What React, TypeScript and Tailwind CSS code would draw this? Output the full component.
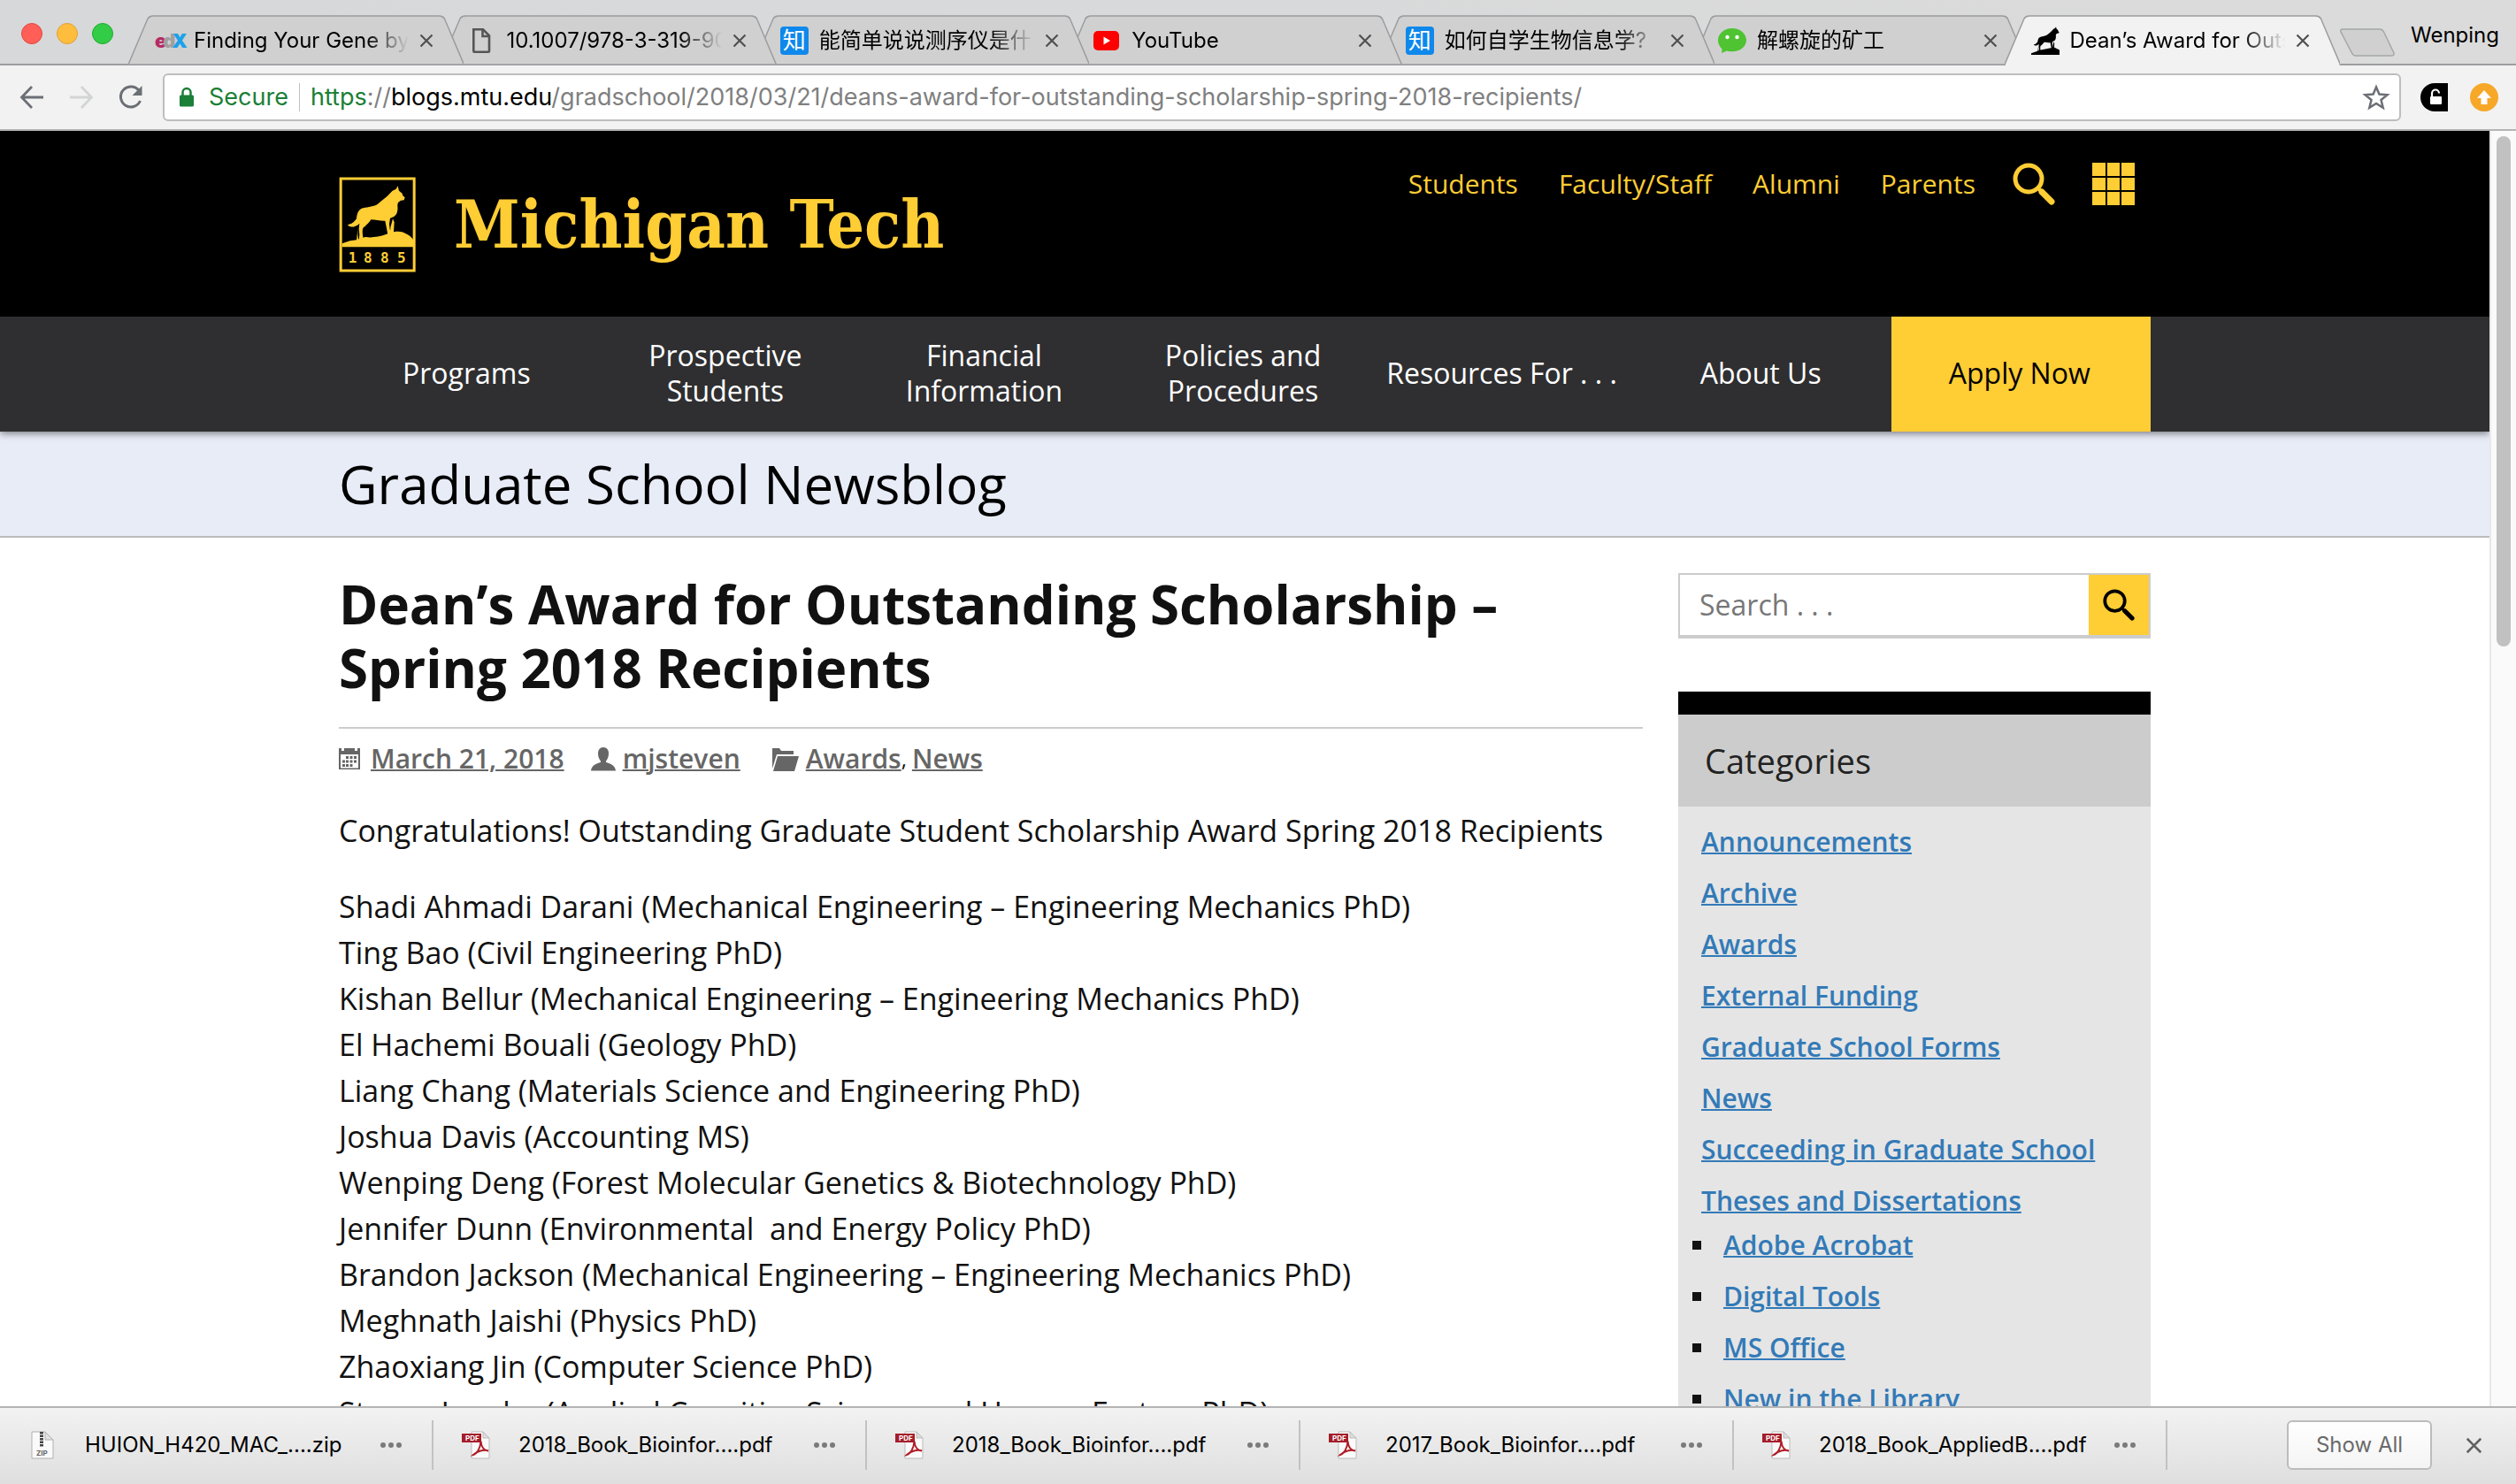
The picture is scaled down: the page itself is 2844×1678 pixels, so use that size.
import React from "react";

const names = [
  "Shadi Ahmadi Darani (Mechanical Engineering – Engineering Mechanics PhD)",
  "Ting Bao (Civil Engineering PhD)",
  "Kishan Bellur (Mechanical Engineering – Engineering Mechanics PhD)",
  "El Hachemi Bouali (Geology PhD)",
  "Liang Chang (Materials Science and Engineering PhD)",
  "Joshua Davis (Accounting MS)",
  "Wenping Deng (Forest Molecular Genetics & Biotechnology PhD)",
  "Jennifer Dunn (Environmental \u00a0and Energy Policy PhD)",
  "Brandon Jackson (Mechanical Engineering – Engineering Mechanics PhD)",
  "Meghnath Jaishi (Physics PhD)",
  "Zhaoxiang Jin (Computer Science PhD)",
  "Steven Landry (Applied Cognitive Science and Human Factors PhD)",
];

const categories = [
  "Announcements",
  "Archive",
  "Awards",
  "External Funding",
  "Graduate School Forms",
  "News",
  "Succeeding in Graduate School",
  "Theses and Dissertations",
];

const subcategories = ["Adobe Acrobat", "Digital Tools", "MS Office", "New in the Library"];

const WOLF =
  "M222 49 L226 65 L237 74 L239 82 L246 88 L243 97 L232 98 L224 104 C218 112 224 124 220 136 C218 148 209 155 196 158 L193 178 L195 196 L203 208 L188 214 L184 192 L179 167 C164 168 148 163 131 163 C124 176 112 184 104 191 C101 200 102 210 104 222 L106 234 L90 234 L92 214 L90 194 L92 176 C84 184 72 190 62 187 C57 186 53 184 53 180 C68 178 74 170 82 160 C84 140 90 128 104 124 C122 119 142 119 154 110 C166 100 176 92 188 82 L203 66 L216 59 Z M205 160 L210 172 L208 207 L197 207 L197 190 Z M87 194 L86 214 L89 236 L82 236 L84 214 Z";
const HILL =
  "M33 244 L60 235 L82 232 L104 224 C116 219 124 226 140 222 C160 221 176 216 196 208 C212 202 234 200 248 210 C258 214 268 222 274 230 L274 256 L33 256 Z";

function EdxIcon() {
  return (
    <span className="flex w-8 shrink-0 items-center text-[22px] leading-8 font-black">
      <span className="text-[#b52a67]">e</span>
      <span className="-ml-1 text-[#a0a0a0]">d</span>
      <span className="-ml-1 text-[#1ba1ea]">X</span>
    </span>
  );
}

function DocIcon() {
  return (
    <svg className="h-8 w-8 shrink-0" viewBox="0 0 32 32" fill="none" stroke="#555" strokeWidth="2.6">
      <path d="M7.3 3.3H18l7 7v17.4a1 1 0 0 1-1 1H8.3a1 1 0 0 1-1-1Z" />
      <path d="M17.5 4v7H25" />
    </svg>
  );
}

function ZhihuIcon() {
  return (
    <span className="flex h-8 w-8 shrink-0 items-center justify-center rounded-sm bg-[#0f88eb] text-[26px] leading-8 text-white">
      知
    </span>
  );
}

function YouTubeIcon() {
  return (
    <svg className="h-8 w-8 shrink-0" viewBox="0 0 32 32">
      <rect x="1" y="5" width="29" height="22" rx="5" fill="#f00" />
      <path d="M12.5 11.5 20 16l-7.500 4.500Z" fill="#fff" />
    </svg>
  );
}

function WeChatIcon() {
  return (
    <svg className="h-8 w-8 shrink-0" viewBox="0 0 32 32">
      <path d="M16 2C7 2 0 8 0 15.500c0 4 2 7.500 4.600 10L4 30l6-2.600c2 .6 4 .9 6 .9 9 0 16-5.600 16-12.800S25 2 16 2Z" fill="#4fc332" />
      <circle cx="10.500" cy="12" r="2.200" fill="#fff" />
      <circle cx="21.500" cy="12" r="2.200" fill="#fff" />
    </svg>
  );
}

function WolfIcon() {
  return (
    <svg className="h-8 w-8 shrink-0" viewBox="33 48 216 208" preserveAspectRatio="none">
      <path d={WOLF} />
      <path d="M33 244 L106 220 L208 200 L249 220 V256 H33 Z" />
    </svg>
  );
}

const tabs = [
  { title: "Finding Your Gene by", icon: <EdxIcon /> },
  { title: "10.1007/978-3-319-90", icon: <DocIcon /> },
  { title: "能简单说说测序仪是什么", icon: <ZhihuIcon /> },
  { title: "YouTube", icon: <YouTubeIcon /> },
  { title: "如何自学生物信息学?", icon: <ZhihuIcon /> },
  { title: "解螺旋的矿工", icon: <WeChatIcon /> },
  { title: "Dean’s Award for Outs", icon: <WolfIcon />, active: true },
];

function Cross({ className }: { className: string }) {
  return (
    <svg className={className} viewBox="0 0 16 16" fill="none" stroke="currentColor" strokeWidth="2.2">
      <path d="M1.500 1.500 14.500 14.500M14.500 1.500 1.500 14.500" />
    </svg>
  );
}

function TabStrip() {
  return (
    <div className="flex h-[74px] shrink-0 items-end border-b-2 border-[#9c9da0] bg-linear-to-r from-[#d7d8da] to-[#dbdbdb]">
      <div className="flex w-[145px] shrink-0 gap-4 self-center pt-1 pl-6">
        <button aria-label="Close window" className="size-6 rounded-full border border-[#e2463f] bg-[#ff5f57]" />
        <button aria-label="Minimize window" className="size-6 rounded-full border border-[#dfa033] bg-[#ffbd3e]" />
        <button aria-label="Zoom window" className="size-6 rounded-full border border-[#1dad2b] bg-[#33cc46]" />
      </div>
      <div className="-mb-0.5 flex min-w-0 flex-1 pl-[26px]">
        {tabs.map((t, i) => (
          <div
            key={t.title}
            className="relative -ml-[26px] flex h-[57px] min-w-0 flex-1 items-center pr-[34px] pl-[30px]"
            style={{ zIndex: t.active ? 20 : 10 - i }}
          >
            <svg className="absolute inset-0 h-full w-full" viewBox="0 0 379 57" preserveAspectRatio="none">
              <path
                d="M0 56 L22 4 Q24 1 28 1 H351 Q355 1 357 4 L379 56"
                fill={t.active ? "#f2f2f2" : "#d0d0d0"}
                stroke="#9a9c9f"
                strokeWidth="1.5"
              />
              <path d="M1 56.200 H378" stroke={t.active ? "#f2f2f2" : "#9c9da0"} strokeWidth="2" />
            </svg>
            <button className="relative flex min-w-0 flex-1 items-center gap-3 text-left">
              {t.icon}
              <span className="min-w-0 flex-1 overflow-hidden mask-r-from-80% text-2xl whitespace-nowrap">
                {t.title}
              </span>
            </button>
            <button aria-label={"Close tab " + t.title} className="relative ml-3 text-[#505050]">
              <Cross className="size-4" />
            </button>
          </div>
        ))}
      </div>
      <div className="flex w-[199px] shrink-0 items-start self-stretch">
        <button aria-label="New tab" className="mt-8">
          <svg className="h-8 w-[62px]" viewBox="0 0 62 32">
            <path d="M3 1H45Q48 1 49.500 4L61 28Q61.500 31 58 31H18Q15 31 13.500 28L1 4Q0 1 3 1Z" fill="#d0d0d0" stroke="#a4a6a8" strokeWidth="1.5" />
          </svg>
        </button>
        <button className="mt-6 ml-[18px] text-2xl">Wenping</button>
      </div>
    </div>
  );
}

function Toolbar() {
  return (
    <div className="flex h-[74px] shrink-0 items-center border-b-2 border-[#b4b4b4] bg-[#f2f2f2] px-5 text-[#5f6368]">
      <button aria-label="Back" className="mr-6">
        <svg className="size-8" viewBox="0 0 32 32" fill="none" stroke="#6b6f75" strokeWidth="2.8">
          <path d="M29 16H5M16 4 4.500 16 16 28" />
        </svg>
      </button>
      <button aria-label="Forward" className="mr-6">
        <svg className="size-8" viewBox="0 0 32 32" fill="none" stroke="#d3d4d5" strokeWidth="2.8">
          <path d="M3 16H27M16 4 27.500 16 16 28" />
        </svg>
      </button>
      <button aria-label="Reload" className="mr-5">
        <svg className="size-8" viewBox="0 0 32 32" fill="none" stroke="#6b6f75" strokeWidth="3">
          <path d="M25.500 9A11.500 11.500 0 1 0 26.500 20" />
          <path d="M28.500 3V14H17.500Z" fill="#6b6f75" stroke="none" />
        </svg>
      </button>
      <div className="flex h-[54px] flex-1 items-center rounded-md border-2 border-[#bdbdbd] bg-white px-4">
        <svg className="mr-4 h-6 w-[18px]" viewBox="0 0 18 24">
          <path d="M4.500 11V6.500a4.500 4.500 0 0 1 9 0V11" fill="none" stroke="#1a7f37" strokeWidth="2.5" />
          <rect x="1" y="9.500" width="16" height="13" rx="1.500" fill="#1a7f37" />
        </svg>
        <span className="border-r border-[#c0c0c0] pr-3 text-[27px] leading-8 text-[#1a7f37]">Secure</span>
        <div className="flex-1 pl-3 text-[27px] leading-8 whitespace-nowrap text-[#808080]">
          <span className="text-[#1a7f37]">https</span>://<span className="text-black">blogs.mtu.edu</span>
          /gradschool/2018/03/21/deans-award-for-outstanding-scholarship-spring-2018-recipients/
        </div>
        <button aria-label="Bookmark this page" className="-mr-1.5">
          <svg className="size-8" viewBox="0 0 32 32" fill="none" stroke="#6b6f75" strokeWidth="2.5">
            <path d="M16 4.500 19.400 12.600 28.500 13.300 21.500 19 23.700 27.800 16 23 8.300 27.800 10.500 19 3.500 13.300 12.600 12.600Z" />
          </svg>
        </button>
      </div>
      <button aria-label="Lock extension" className="ml-[22px]">
        <svg className="size-8" viewBox="0 0 32 32">
          <path d="M31 0H16A16 16 0 0 0 16 32H31Z" fill="#000" />
          <rect x="11" y="15" width="13" height="9" rx="1" fill="#fff" />
          <path d="M13 15v-3.500a4 4 0 0 1 8 0" fill="none" stroke="#fff" strokeWidth="2.2" />
        </svg>
      </button>
      <button aria-label="Update available" className="ml-6">
        <svg className="size-8" viewBox="0 0 32 32">
          <circle cx="16" cy="16" r="16" fill="#f7a829" />
          <path d="M16 8 24 17H19.500V24H12.500V17H8Z" fill="#fff" />
        </svg>
      </button>
    </div>
  );
}

function Magnifier({ className }: { className: string }) {
  return (
    <svg className={className} viewBox="0 0 48 48" fill="none" stroke="currentColor">
      <circle cx="18" cy="18" r="15" strokeWidth="5" />
      <path d="M33 33 44 44" strokeWidth="7" strokeLinecap="round" />
      <path d="M28 28 34 34" strokeWidth="4" />
    </svg>
  );
}

function SiteHeader() {
  return (
    <header className="bg-black text-[#ffcd34]">
      <div className="mx-auto flex h-[210px] w-full max-w-[2048px] items-start justify-between">
        <a href="#home" className="flex items-center gap-[42px] pt-[52px]">
          <svg className="h-[108px] w-[88px]" viewBox="22 18 264 324" fill="currentColor">
            <rect x="28.500" y="24" width="249" height="312" fill="none" stroke="currentColor" strokeWidth="9" />
            <path d={WOLF} />
            <path d={HILL} />
            <g className="font-['DejaVu_Sans_Mono',monospace] text-[48px] font-bold">
              <text x="54" y="309">1</text>
              <text x="106" y="309">8</text>
              <text x="163" y="309">8</text>
              <text x="220" y="309">5</text>
            </g>
          </svg>
          <span className="font-['DejaVu_Serif_Condensed','DejaVu_Serif',serif] text-[75px] leading-[104px] font-bold whitespace-nowrap">
            Michigan Tech
          </span>
        </a>
        <nav aria-label="Audience" className="flex items-center gap-[46px] pt-9 pr-[18px] text-[30px] leading-[48px] font-medium">
          <a href="#students">Students</a>
          <a href="#faculty">Faculty/Staff</a>
          <a href="#alumni">Alumni</a>
          <a href="#parents">Parents</a>
          <button aria-label="Search site" className="-mx-1">
            <Magnifier className="size-12" />
          </button>
          <button aria-label="All sites" className="grid size-12 grid-cols-3 gap-0.5">
            {[0, 1, 2, 3, 4, 5, 6, 7, 8].map((n) => (
              <span key={n} className="bg-[#ffcd34]" />
            ))}
          </button>
        </nav>
      </div>
      <nav aria-label="Main" className="relative bg-[#2f2f31] shadow-[0_2px_8px_rgba(0,0,0,0.5)]">
        <div className="mx-auto grid h-[130px] w-full max-w-[2048px] grid-cols-7 text-center text-[32px] leading-10 font-medium text-white">
          {["Programs", "Prospective Students", "Financial Information", "Policies and Procedures"].map((n) => (
            <a key={n} href="#menu" className="flex items-center justify-center pr-11 pb-0.5 pl-10">
              {n}
            </a>
          ))}
          <a href="#resources" className="flex items-center justify-center pr-1 pb-0.5">Resources For . . .</a>
          <a href="#about" className="flex items-center justify-center pr-1 pb-0.5">About Us</a>
          <a href="#apply" className="flex items-center justify-center bg-[#ffcd34] pr-1 pb-0.5 font-normal text-black">
            Apply Now
          </a>
        </div>
      </nav>
    </header>
  );
}

function Article() {
  return (
    <article className="min-w-0 flex-1 text-[#111]">
      <h1 className="text-[60px] leading-[72px] font-bold">Dean’s Award for Outstanding Scholarship – Spring 2018 Recipients</h1>
      <div className="mt-[31px] flex items-center border-t-2 border-[#ccc] pt-[14px] text-[30px] leading-10 font-semibold text-[#666]">
        <svg className="mr-3 h-6 w-6" viewBox="0 0 24 24" fill="#666">
          <path d="M0 0H3V3H6V0H18V3H21V0H24V24H0ZM2 7V22.500H22V7Z" fillRule="evenodd" />
          <path d="M8 9h3v3H8zM12.500 9h3v3h-3zM17 9h3v3h-3zM4 13.500h3v3H4zM8 13.500h3v3H8zM12.500 13.500h3v3h-3zM17 13.500h3v3h-3zM4 18h3v3H4zM8 18h3v3H8zM12.500 18h3v3h-3z" />
        </svg>
        <a href="#date" className="underline decoration-2">March 21, 2018</a>
        <svg className="mr-2 ml-[30px] h-7 w-7" viewBox="0 0 28 28" fill="#666">
          <path d="M14 1C18 1 20 4 20 8 20 12 18.500 14.500 17 16.500V18C22 19.500 27.500 21.500 28 27.500H0C.5 21.500 6 19.500 11 18V16.500C9.500 14.500 8 12 8 8 8 4 10 1 14 1Z" />
        </svg>
        <a href="#author" className="underline decoration-2">mjsteven</a>
        <svg className="mr-2 ml-9 h-7 w-[30px]" viewBox="0 0 30 28" fill="#666">
          <path d="M0 25V2H8L10 5H24V9H5L0 25Z" />
          <path d="M6 11H30L25 28H1Z" />
        </svg>
        <a href="#awards" className="underline decoration-2">Awards</a>
        <span className="mr-1.5 text-2xl font-normal text-[#111]">,</span>
        <a href="#news" className="underline decoration-2">News</a>
      </div>
      <div className="pt-[35px] text-[34px] leading-[52px]">
        <p className="mb-[34px]">Congratulations! Outstanding Graduate Student Scholarship Award Spring 2018 Recipients</p>
        <p>
          {names.map((n) => (
            <React.Fragment key={n}>
              {n}
              <br />
            </React.Fragment>
          ))}
        </p>
      </div>
    </article>
  );
}

function Sidebar() {
  return (
    <aside className="mt-px w-[534px] shrink-0">
      <form className="flex h-[74px] border-2 border-b-4 border-[#ccc]">
        <input
          aria-label="Search"
          placeholder="Search . . ."
          className="min-w-0 flex-1 bg-white px-[22px] text-[32px] placeholder:text-[#777]"
        />
        <button type="button" aria-label="Submit search" className="flex w-[68px] items-center justify-center bg-[#ffcd34] text-black">
          <Magnifier className="size-9" />
        </button>
      </form>
      <section className="mt-[60px] border-t-26 border-black bg-[#e5e5e5]">
        <h2 className="bg-[#ccc] px-[30px] text-[38px] leading-[104px] text-[#222]">Categories</h2>
        <ul className="pt-[11px] pl-[26px] text-[30px] leading-[58px] font-semibold text-[#337ab7]">
          {categories.map((c) => (
            <li key={c}>
              <a href="#category" className="underline decoration-2">{c}</a>
            </li>
          ))}
          <li>
            <ul className="-mt-2">
              {subcategories.map((c) => (
                <li key={c} className="-ml-[10px] flex items-center gap-[25px]">
                  <span className="size-[10px] bg-[#111]" />
                  <a href="#category" className="underline decoration-2">{c}</a>
                </li>
              ))}
            </ul>
          </li>
        </ul>
      </section>
    </aside>
  );
}

function ZipIcon() {
  return (
    <svg className="size-8" viewBox="0 0 32 32">
      <path d="M4 1H19L28 10V31H4Z" fill="#fafafa" stroke="#b0b0b0" />
      <path d="M19 1V10H28Z" fill="#e2e2e2" stroke="#b0b0b0" />
      <path d="M15 1V18" stroke="#444" strokeWidth="4" strokeDasharray="2.5 1" />
      <text x="9" y="28" fontSize="8" className="font-bold" fill="#666">ZIP</text>
    </svg>
  );
}

function PdfIcon() {
  return (
    <svg className="size-8" viewBox="0 0 32 32">
      <path d="M11 1H24L31 8V31H11Z" fill="#fafafa" stroke="#bbb" />
      <path d="M24 1V8H31Z" fill="#ddd" stroke="#bbb" />
      <path d="M13 27C17 26 21 20 21.500 11.500 22 18 25 22 30 22.500 25 20.500 17 23 13 27Z" fill="none" stroke="#b01c26" strokeWidth="2" />
      <rect x="0" y="3" width="22" height="10" fill="#a51d2a" />
      <text x="4" y="11" fontSize="8" className="font-bold" fill="#fff">PDF</text>
    </svg>
  );
}

const downloads = [
  "HUION_H420_MAC_....zip",
  "2018_Book_Bioinfor....pdf",
  "2018_Book_Bioinfor....pdf",
  "2017_Book_Bioinfor....pdf",
  "2018_Book_AppliedB....pdf",
];

function DownloadBar() {
  return (
    <footer className="flex h-[88px] shrink-0 items-center border-t-2 border-[#b4b4b4] bg-linear-to-b from-[#f2f2f2] to-[#dfdfdf] pb-0.5">
      {downloads.map((d, i) => (
        <div key={i} className="flex h-14 w-[490px] items-center border-r-2 border-[#c2c2c2] pr-[34px] pl-8">
          <button className="flex flex-1 items-center gap-8 text-2xl">
            {i === 0 ? <ZipIcon /> : <PdfIcon />}
            {d}
          </button>
          <button aria-label={"Options for " + d} className="flex gap-[3px]">
            <span className="size-1.5 rounded-full bg-[#7b7b7b]" />
            <span className="size-1.5 rounded-full bg-[#7b7b7b]" />
            <span className="size-1.5 rounded-full bg-[#7b7b7b]" />
          </button>
        </div>
      ))}
      <button className="ml-auto h-14 w-[164px] rounded-md border-2 border-[#bcbcbc] bg-linear-to-b from-white to-[#f4f4f4] text-2xl text-[#6a6a6a]">
        Show All
      </button>
      <button aria-label="Close downloads bar" className="mr-[38px] ml-[38px] text-[#606060]">
        <Cross className="size-[19px]" />
      </button>
    </footer>
  );
}

export default function App() {
  return (
    <div className="flex h-screen flex-col overflow-hidden bg-white font-['Inter','Noto_Sans_CJK_SC',sans-serif] text-black">
      <TabStrip />
      <Toolbar />
      <div className="flex min-h-0 flex-1">
        <div className="min-w-0 flex-1 overflow-hidden font-['Open_Sans',sans-serif]">
          <SiteHeader />
          <div className="border-b-2 border-[#bbb] bg-[#e8ecf7]">
            <p className="mx-auto w-full max-w-[2048px] text-[60px] leading-[118px]">Graduate School Newsblog</p>
          </div>
          <main className="mx-auto flex w-full max-w-[2048px] items-start gap-10 pt-[39px]">
            <Article />
            <Sidebar />
          </main>
        </div>
        <div className="w-[30px] shrink-0 border-l-2 border-[#e8e8e8] bg-[#fafafa] px-1.5 pt-1.5">
          <div className="h-[577px] w-4 rounded-full bg-[#c1c1c1]" />
        </div>
      </div>
      <DownloadBar />
    </div>
  );
}
